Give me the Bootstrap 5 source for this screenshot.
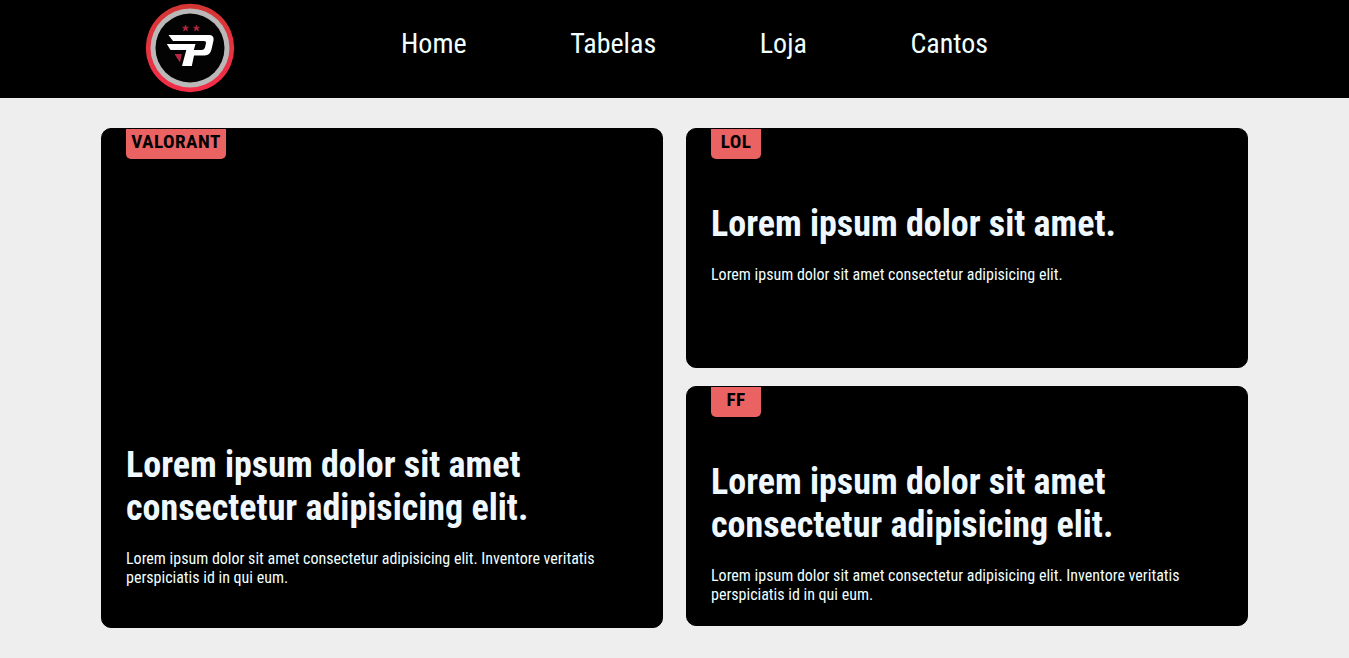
<!DOCTYPE html>
<html lang="pt-BR">
<head>
<meta charset="utf-8">
<meta name="viewport" content="width=device-width, initial-scale=1">
<title>paiN Gaming</title>
<link rel="stylesheet" href="https://cdn.jsdelivr.net/npm/bootstrap@5.3.0/dist/css/bootstrap.min.css">
<style>
body { background: #eee; font-family: "Roboto Condensed", Roboto, sans-serif; font-stretch: 75%; line-height: 18.75px; overflow: hidden; }
.site-header { height: 98px; background: #000; padding-left: 140px; }
.crest { width: 100px; height: 98px; }
.menu { margin-left: 161px; gap: 103.6px; margin-top: -12px; }
.menu a { color: azure; font-size: 28px; line-height: 33px; padding: 0; white-space: nowrap; }
.news { padding: 30px 101px 0; gap: 23px; }
.news-column { flex: 1 1 0; gap: 18px; }
.news-card { background: #000; color: azure; border: 1px solid #000; border-radius: 10px; height: 240px; padding: 0 24px; }
.news-card.featured { height: 500px; }
.tag { width: 50px; height: 30px; flex: none; background: #eb6262; color: #000; border-radius: 0 0 5px 5px; font-size: 19.2px; font-weight: 700; line-height: 26px; text-align: center; letter-spacing: .45px; }
.tag.wide { width: 100px; }
.news-card h2 { color: aliceblue; font-size: 36px; font-weight: 700; line-height: 43px; margin: 44px 0 19px; }
.featured h2 { margin-top: 285px; }
.news-card p { font-size: 16px; line-height: 19px; }
</style>
</head>
<body>
<header class="site-header d-flex align-items-center">
  <a href="#" aria-label="Início"><svg class="crest d-block" viewBox="0 0 100 98">
    <defs><linearGradient id="ring" x2="0" y2="1"><stop stop-color="#d23632"/><stop offset=".5" stop-color="#e53340"/><stop offset="1" stop-color="#f42d49"/></linearGradient></defs>
    <circle cx="50" cy="48" r="44.2" fill="url(#ring)"/>
    <circle cx="50" cy="48" r="39.5" fill="#bbb8b9"/>
    <circle cx="50" cy="48" r="34.5" fill="#030303"/>
    <path fill="#b92843" stroke="#b92843" stroke-width=".5" d="M45.5 25l.8 2.2h2.3l-1.8 1.4.7 2.4-2-1.4-2 1.4.7-2.4-1.8-1.4h2.3zM56.5 25l.8 2.2h2.3l-1.8 1.4.7 2.4-2-1.4-2 1.4.7-2.4-1.8-1.4h2.3z"/>
    <path fill="#fff" d="M28.5 35H69q5 0 4.6 5l-2 9q-1.5 6.5-7 6.5H54L51.8 66H42l4.3-16H30.5L26.8 44H55.5L53.8 50H62q2.4 0 3-2.4L66 43q.3-2-2-2H33z"/>
    <path fill="#b92843" d="M34.5 54h7.3L40 62.5z"/>
  </svg></a>
  <nav class="menu d-flex">
    <a class="nav-link" href="#">Home</a>
    <a class="nav-link" href="#">Tabelas</a>
    <a class="nav-link" href="#">Loja</a>
    <a class="nav-link" href="#">Cantos</a>
  </nav>
</header>
<main class="news d-flex">
  <div class="news-column d-flex flex-column">
    <article class="news-card featured d-flex flex-column">
      <span class="tag wide">VALORANT</span>
      <h2>Lorem ipsum dolor sit amet consectetur adipisicing elit.</h2>
      <p class="mb-0">Lorem ipsum dolor sit amet consectetur adipisicing elit. Inventore veritatis perspiciatis id in qui eum.</p>
    </article>
  </div>
  <div class="news-column d-flex flex-column">
    <article class="news-card d-flex flex-column">
      <span class="tag">LOL</span>
      <h2>Lorem ipsum dolor sit amet.</h2>
      <p class="mb-0">Lorem ipsum dolor sit amet consectetur adipisicing elit.</p>
    </article>
    <article class="news-card d-flex flex-column">
      <span class="tag">FF</span>
      <h2>Lorem ipsum dolor sit amet consectetur adipisicing elit.</h2>
      <p class="mb-0">Lorem ipsum dolor sit amet consectetur adipisicing elit. Inventore veritatis perspiciatis id in qui eum.</p>
    </article>
  </div>
</main>
<script src="https://cdn.jsdelivr.net/npm/bootstrap@5.3.0/dist/js/bootstrap.bundle.min.js"></script>
</body>
</html>
